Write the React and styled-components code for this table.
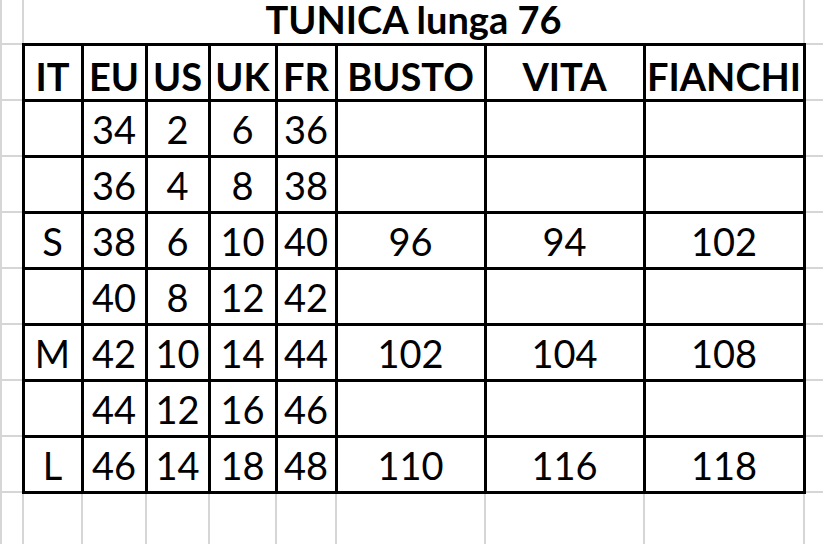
import React from "react";
import styled, { createGlobalStyle } from "styled-components";

const Global = createGlobalStyle`
  html, body { margin: 0; padding: 0; background: #fff; overflow: hidden; }
  body { width: 823px; height: 544px; }
`;

const GRID = "#d6d6d6";

const Sheet = styled.table`
  border-collapse: collapse;
  table-layout: fixed;
  width: 823px;
  font-family: Lato, "Open Sans", sans-serif;
  color: #000;
`;

const Row = styled.tr`
  height: ${(p) => p.$h}px;
`;

const Margin = styled.td`
  padding: 0;
  border-top: ${(p) => (p.$noTop ? "none" : `2px solid ${GRID}`)};
  border-bottom: 2px solid ${GRID};
  border-left: 2px solid ${GRID};
  border-right: ${(p) => (p.$noRight ? "none" : `2px solid ${GRID}`)};
`;

const Title = styled.td`
  padding: 0 0 4.5px;
  border-left: 2px solid ${GRID};
  border-right: 2px solid ${GRID};
  border-top: none;
  text-align: center;
  vertical-align: bottom;
  font-size: 38px;
  line-height: 38px;
  font-weight: 700;
  white-space: nowrap;
`;

const Cell = styled.td`
  padding: 0 0 ${(p) => (p.$head ? 3.5 : 6.5)}px;
  border: 3px solid #000;
  text-align: center;
  vertical-align: bottom;
  font-size: 38px;
  line-height: 38px;
  font-weight: ${(p) => (p.$head ? 700 : 400)};
  white-space: nowrap;
  overflow: visible;
`;

const widths = [22, 59, 64, 63, 67, 60, 149, 159, 160, 20];
const headers = ["IT", "EU", "US", "UK", "FR", "BUSTO", "VITA", "FIANCHI"];
const data = [
  ["", "34", "2", "6", "36", "", "", ""],
  ["", "36", "4", "8", "38", "", "", ""],
  ["S", "38", "6", "10", "40", "96", "94", "102"],
  ["", "40", "8", "12", "42", "", "", ""],
  ["M", "42", "10", "14", "44", "102", "104", "108"],
  ["", "44", "12", "16", "46", "", "", ""],
  ["L", "46", "14", "18", "48", "110", "116", "118"],
];

export default function App() {
  return (
    <>
      <Global />
      <Sheet>
        <colgroup>
          {widths.map((w, i) => (
            <col key={i} style={{ width: w }} />
          ))}
        </colgroup>
        <tbody>
          <Row $h={44}>
            <Margin $noTop />
            <Title colSpan={8}>TUNICA lunga 76</Title>
            <Margin $noTop $noRight />
          </Row>
          <Row $h={56}>
            <Margin />
            {headers.map((h) => (
              <Cell key={h} $head>
                {h}
              </Cell>
            ))}
            <Margin $noRight />
          </Row>
          {data.map((r, i) => (
            <Row $h={56} key={i}>
              <Margin />
              {r.map((v, j) => (
                <Cell key={j}>{v}</Cell>
              ))}
              <Margin $noRight />
            </Row>
          ))}
          <Row $h={56}>
            {widths.map((_, i) => (
              <Margin key={i} $noRight={i === widths.length - 1} />
            ))}
          </Row>
        </tbody>
      </Sheet>
    </>
  );
}
